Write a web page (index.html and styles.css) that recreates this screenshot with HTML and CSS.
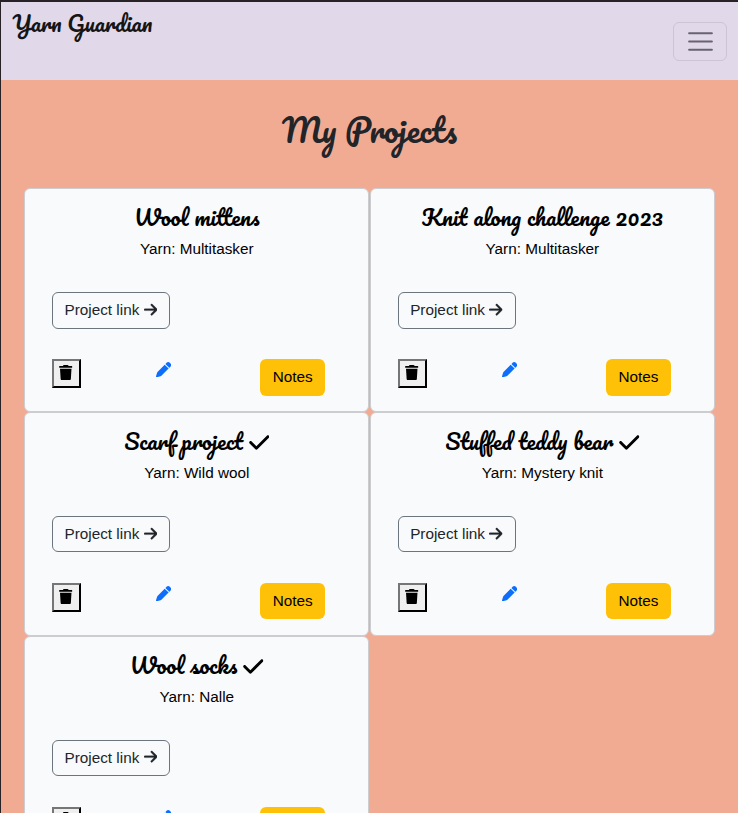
FILE: index.html
```html
<!DOCTYPE html>
<html lang="en">
<head>
<meta charset="utf-8">
<title>Yarn Guardian</title>
<link rel="stylesheet" href="styles.css">
</head>
<body>
<svg class="sprite" aria-hidden="true">
  <symbol id="arrow" viewBox="0 0 448 512"><path d="M438.6 278.6c12.500-12.500 12.500-32.800 0-45.300l-160-160c-12.500-12.500-32.800-12.500-45.300 0s-12.500 32.800 0 45.300L338.800 224H32c-17.700 0-32 14.300-32 32s14.300 32 32 32h306.700L233.400 393.400c-12.500 12.500-12.500 32.800 0 45.300s32.800 12.500 45.300 0l160-160z"/></symbol>
  <symbol id="check" viewBox="0 0 448 512"><path d="M438.600 105.400c12.500 12.500 12.500 32.800 0 45.300l-256 256c-12.500 12.500-32.800 12.500-45.300 0l-128-128c-12.500-12.500-12.500-32.800 0-45.300s32.800-12.500 45.300 0L160 338.700 393.400 105.400c12.500-12.500 32.800-12.500 45.300 0z"/></symbol>
  <symbol id="trash" viewBox="0 0 448 512"><path d="M135.200 17.700C140.600 6.800 151.700 0 163.800 0h120.400c12.100 0 23.200 6.800 28.600 17.700L320 32h96c17.700 0 32 14.300 32 32s-14.300 32-32 32H32C14.300 96 0 81.700 0 64s14.300-32 32-32h96zM32 128h384l-21.200 339c-1.600 25.300-22.600 45-47.900 45H101.100c-25.300 0-46.300-19.700-47.900-45z"/></symbol>
  <symbol id="pencil" viewBox="0 0 512 512"><path d="M410.300 231l11.300-11.300-33.900-33.900-62.100-62.100-33.900-33.900-11.300 11.300-22.600 22.600L58.600 322.900c-10.400 10.400-18 23.300-22.200 37.400L1 480.700c-2.500 8.400-.2 17.500 6.100 23.700s15.300 8.500 23.700 6.100l120.300-35.400c14.100-4.200 27-11.800 37.400-22.200l199.200-199.200zM362.700 18.700l-14.400 14.500-22.600 22.600-11.400 11.300 33.900 33.900 62.100 62.100 33.900 33.900 11.300-11.300 22.600-22.600 14.500-14.500c25-25 25-65.500 0-90.500l-39.300-39.400c-25-25-65.500-25-90.500 0z"/></symbol>
</svg>
<header class="navbar">
  <a class="brand">Yarn Guardian</a>
  <button class="toggler" aria-label="Toggle navigation"><svg viewBox="0 0 30 30"><path d="M4 7h22M4 15h22M4 23h22"/></svg></button>
</header>
<main>
  <h1>My Projects</h1>
  <div class="grid">
    <article class="card">
      <h2>Wool mittens</h2>
      <p>Yarn: Multitasker</p>
      <a class="link">Project link <svg><use href="#arrow"/></svg></a>
      <div class="actions"><button class="trash"><svg><use href="#trash"/></svg></button><a class="edit"><svg><use href="#pencil"/></svg></a><a class="notes">Notes</a></div>
    </article>
    <article class="card">
      <h2>Knit along challenge 2023</h2>
      <p>Yarn: Multitasker</p>
      <a class="link">Project link <svg><use href="#arrow"/></svg></a>
      <div class="actions"><button class="trash"><svg><use href="#trash"/></svg></button><a class="edit"><svg><use href="#pencil"/></svg></a><a class="notes">Notes</a></div>
    </article>
    <article class="card">
      <h2>Scarf project <svg><use href="#check"/></svg></h2>
      <p>Yarn: Wild wool</p>
      <a class="link">Project link <svg><use href="#arrow"/></svg></a>
      <div class="actions"><button class="trash"><svg><use href="#trash"/></svg></button><a class="edit"><svg><use href="#pencil"/></svg></a><a class="notes">Notes</a></div>
    </article>
    <article class="card">
      <h2>Stuffed teddy bear <svg><use href="#check"/></svg></h2>
      <p>Yarn: Mystery knit</p>
      <a class="link">Project link <svg><use href="#arrow"/></svg></a>
      <div class="actions"><button class="trash"><svg><use href="#trash"/></svg></button><a class="edit"><svg><use href="#pencil"/></svg></a><a class="notes">Notes</a></div>
    </article>
    <article class="card">
      <h2>Wool socks <svg><use href="#check"/></svg></h2>
      <p>Yarn: Nalle</p>
      <a class="link">Project link <svg><use href="#arrow"/></svg></a>
      <div class="actions"><button class="trash"><svg><use href="#trash"/></svg></button><a class="edit"><svg><use href="#pencil"/></svg></a><a class="notes" aria-label="Notes"></a></div>
    </article>
  </div>
</main>
</body>
</html>
```
FILE: styles.css
```css
* { box-sizing: border-box; }
html { height: 813px; overflow: hidden; }
body {
  margin: 0;
  height: 813px;
  overflow: hidden;
  border-top: 2px solid #272226;
  border-left: 1px solid #272226;
  background: #f2ab93;
  color: #000;
  font: 15.3px/23px "Liberation Sans", Arial, sans-serif;
}
.sprite { display: none; }
svg { fill: currentColor; }
.navbar {
  display: flex;
  justify-content: space-between;
  height: 78px;
  padding: 0 11px 0 11.5px;
  background: #e1d8ea;
}
.brand, h1, h2 {
  font-family: "Pacifico", "Liberation Serif", serif;
  font-weight: 400;
}
.brand { margin-top: 6px; font-size: 21.8px; line-height: 30px; color: #151515; }
.toggler {
  width: 54px;
  height: 39px;
  margin-top: 20px;
  padding: 0;
  border: 1px solid #cdc5d6;
  border-radius: 6px;
  background: none;
  color: #686370;
  display: grid;
  place-items: center;
}
.toggler svg { width: 31px; height: 31px; fill: none; stroke: currentColor; stroke-width: 2; stroke-linecap: round; }
h1 {
  margin: 27px 0 0;
  height: 81px;
  font-size: 32.4px;
  line-height: 46px;
  text-align: center;
  color: #212529;
}
.grid {
  display: grid;
  grid-template-columns: 345.4px 345.4px;
  grid-auto-rows: 223.8px;
  height: 625px;
  overflow: hidden;
  margin-left: 23.1px;
}
.card {
  border: 1px solid #cdcccf;
  border-radius: 6px;
  background: #f8fafc;
  padding: 13px 27px 0;
}
.card:nth-child(even) { margin-left: .3px; }
h2 { margin: 0; height: 30px; font-size: 21.9px; line-height: 30px; text-align: center; white-space: nowrap; }
h2 svg { width: 20.5px; height: 23px; vertical-align: -4px; }
p { margin: 5px 0 32px; text-align: center; }
.link {
  display: block;
  width: 118.4px;
  height: 36.6px;
  padding: 5px 0 0 11.4px;
  border: 1px solid #6c757d;
  border-radius: 6px;
  color: #212529;
  white-space: nowrap;
}
.link svg { width: 13.5px; height: 15.3px; vertical-align: -2px; stroke: currentColor; stroke-width: 10; }
.actions { display: grid; grid-template-columns: 104px 104px 65.4px; align-items: start; margin-top: 30.4px; }
.trash {
  width: 29px;
  height: 29px;
  padding: 0 1px 2px 0;
  border: 2px outset #000;
  border-color: #767676 #303030 #303030 #767676;
  background: #efefef;
  color: #000;
  display: grid;
  place-items: center;
}
.trash svg { width: 13.5px; height: 15.3px; }
.edit { color: #0d6efd; height: 23px; padding-top: 3px; line-height: 0; }
.edit svg { width: 15.3px; height: 15.3px; }
.notes { height: 36.6px; padding-top: 6px; border-radius: 6px; background: #ffc107; text-align: center; }
```
